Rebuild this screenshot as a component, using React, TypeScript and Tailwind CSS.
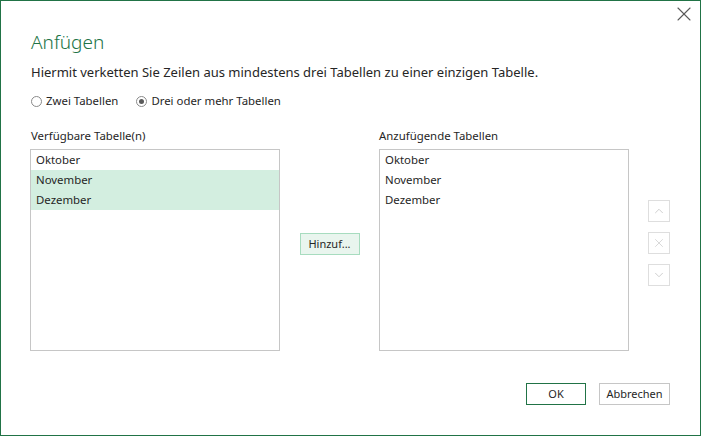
import { ChevronUp, ChevronDown, X } from 'lucide-react';

const available = ['Oktober', 'November', 'Dezember'];
const selected = ['November', 'Dezember'];
const toAppend = ['Oktober', 'November', 'Dezember'];

function Radio({ checked, label }: { checked: boolean; label: string }) {
  return (
    <label className="flex items-center gap-[4px]">
      <span className="w-[11px] h-[11px] rounded-full border border-[#8a8a8a] bg-white flex items-center justify-center">
        {checked && <span className="w-[5px] h-[5px] rounded-full bg-[#5a5a5a]" />}
      </span>
      <span>{label}</span>
    </label>
  );
}

function SideButton({ children }: { children: React.ReactNode }) {
  return (
    <div className="w-[22px] h-[22px] border border-[#dedede] bg-white flex items-center justify-center text-[#c8c8c8]">
      {children}
    </div>
  );
}

export default function App() {
  return (
    <div
      className="w-[701px] h-[436px] bg-white border border-[#217346] flex flex-col text-[#262626]"
      style={{ fontFamily: '"Segoe UI", "Noto Sans", "Open Sans", sans-serif' }}
    >
      <div className="flex justify-end pt-[1px] pr-[4px] h-[24px]">
        <X className="w-[24px] h-[24px] text-[#5a5a5a]" strokeWidth={1.1} />
      </div>

      <div className="pl-[29px] pr-[30px] flex flex-col">
        <h1 className="text-[19px] font-light text-[#217346] leading-[24px] mt-[5px] pl-[1px]">Anfügen</h1>
        <p className="text-[13px] leading-[18px] mt-[9px] pl-[1px]">
          Hiermit verketten Sie Zeilen aus mindestens drei Tabellen zu einer einzigen Tabelle.
        </p>

        <div className="flex items-center gap-[18px] text-[11.4px] mt-[12px] leading-[16px] pl-[1px]">
          <Radio checked={false} label="Zwei Tabellen" />
          <Radio checked={true} label="Drei oder mehr Tabellen" />
        </div>

        <div className="flex mt-[19px] text-[11.4px]">
          <div className="flex flex-col w-[250px]">
            <div className="leading-[16px] mb-[5px] pl-[1px]">Verfügbare Tabelle(n)</div>
            <div className="h-[202px] border border-[#c6c6c6] flex flex-col">
              {available.map((t) => (
                <div
                  key={t}
                  className={`h-[20px] leading-[20px] px-[5px] ${selected.includes(t) ? 'bg-[#d3eee0]' : ''}`}
                >
                  {t}
                </div>
              ))}
            </div>
          </div>

          <div className="w-[99px] flex items-start justify-center pt-[105px]">
            <button className="w-[60px] h-[22px] border border-[#a7dcbf] bg-[#e9f5ee] text-[11px] leading-[20px]">
              Hinzuf...
            </button>
          </div>

          <div className="flex flex-col w-[250px]">
            <div className="leading-[16px] mb-[5px]">Anzufügende Tabellen</div>
            <div className="h-[202px] border border-[#c6c6c6] flex flex-col">
              {toAppend.map((t) => (
                <div key={t} className="h-[20px] leading-[20px] px-[5px]">
                  {t}
                </div>
              ))}
            </div>
          </div>

          <div className="flex flex-col gap-[10px] pl-[19px] pt-[72px]">
            <SideButton>
              <ChevronUp className="w-[14px] h-[14px]" strokeWidth={1.5} />
            </SideButton>
            <SideButton>
              <X className="w-[14px] h-[14px]" strokeWidth={1.2} />
            </SideButton>
            <SideButton>
              <ChevronDown className="w-[14px] h-[14px]" strokeWidth={1.5} />
            </SideButton>
          </div>
        </div>

        <div className="flex justify-end gap-[13px] mt-[32px] text-[11px]">
          <button className="w-[60px] h-[22px] border border-[#217346] bg-white leading-[20px]">OK</button>
          <button className="w-[71px] h-[22px] border border-[#c6c6c6] bg-white leading-[20px]">Abbrechen</button>
        </div>
      </div>
    </div>
  );
}
